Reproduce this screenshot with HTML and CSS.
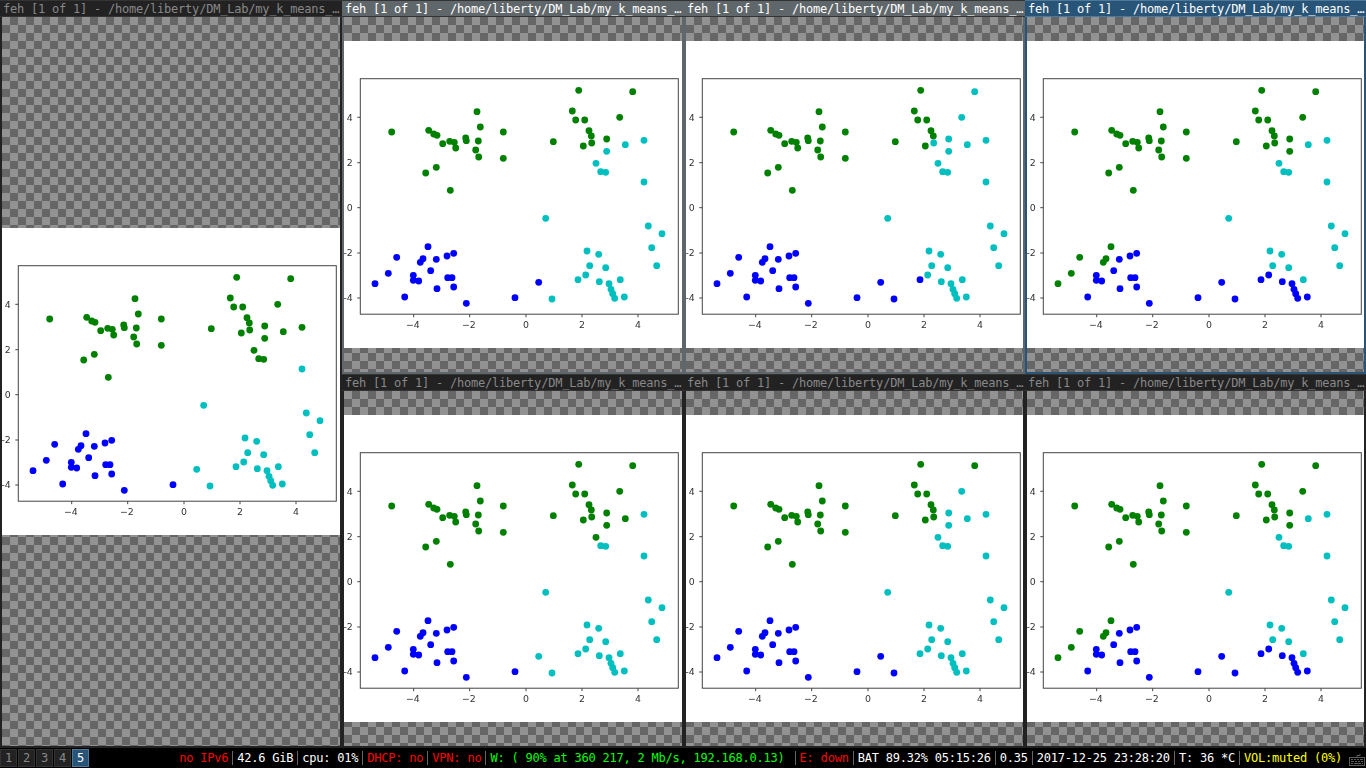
FILE: index.html
```html
<!DOCTYPE html>
<html lang="en">
<head>
    <meta charset="UTF-8">
    <meta name="viewport" content="width=device-width, initial-scale=1.0">
    <title>i3 desktop with feh windows</title>
    <link rel="stylesheet" href="styles.css">
</head>
<body>
    <div class="desktop">
        <div class="workspace">
            <div class="win win-tall">
                <div class="title">feh [1 of 1] - /home/liberty/DM_Lab/my_k_means_…</div>
                <div class="frame"><div class="image"><svg class="plot" data-plot="0"></svg></div></div>
            </div>
            <div class="win win-inactive">
                <div class="title">feh [1 of 1] - /home/liberty/DM_Lab/my_k_means_…</div>
                <div class="frame"><div class="image"><svg class="plot" data-plot="1"></svg></div></div>
            </div>
            <div class="win win-inactive">
                <div class="title">feh [1 of 1] - /home/liberty/DM_Lab/my_k_means_…</div>
                <div class="frame"><div class="image"><svg class="plot" data-plot="2"></svg></div></div>
            </div>
            <div class="win win-focused">
                <div class="title">feh [1 of 1] - /home/liberty/DM_Lab/my_k_means_…</div>
                <div class="frame"><div class="image"><svg class="plot" data-plot="3"></svg></div></div>
            </div>
            <div class="win">
                <div class="title">feh [1 of 1] - /home/liberty/DM_Lab/my_k_means_…</div>
                <div class="frame"><div class="image"><svg class="plot" data-plot="4"></svg></div></div>
            </div>
            <div class="win">
                <div class="title">feh [1 of 1] - /home/liberty/DM_Lab/my_k_means_…</div>
                <div class="frame"><div class="image"><svg class="plot" data-plot="5"></svg></div></div>
            </div>
            <div class="win">
                <div class="title">feh [1 of 1] - /home/liberty/DM_Lab/my_k_means_…</div>
                <div class="frame"><div class="image"><svg class="plot" data-plot="6"></svg></div></div>
            </div>
        </div>

        <div class="bar">
            <div class="tags">
                <span class="tag">1</span>
                <span class="tag">2</span>
                <span class="tag">3</span>
                <span class="tag">4</span>
                <span class="tag tag-active">5</span>
            </div>
            <div class="status">
                <span class="item red">no IPv6</span>
                <span class="item">42.6 GiB</span>
                <span class="item">cpu: 01%</span>
                <span class="item red">DHCP: no</span>
                <span class="item red">VPN: no</span>
                <span class="item green wide">W: ( 90% at 360 217, 2 Mb/s, 192.168.0.13)</span>
                <span class="item red">E: down</span>
                <span class="item">BAT 89.32% 05:15:26</span>
                <span class="item">0.35</span>
                <span class="item">2017-12-25 23:28:20</span>
                <span class="item">T: 36 *C</span>
                <span class="item last yellow">VOL:muted (0%)</span>
                <svg class="kbd" viewBox="0 0 16 12">
                    <path d="M8 3V1.5h3V0" fill="none" stroke="#5c5c5c"/>
                    <rect x="0.5" y="3.5" width="15" height="8" fill="none" stroke="#5c5c5c"/>
                    <path d="M2 5h2v1H2zM5 5h2v1H5zM8 5h2v1H8zM11 5h3v1h-3zM2 7h3v1H2zM6 7h2v1H6zM9 7h2v1H9zM12 7h2v1h-2zM2 9h2v1H2zM5 9h7v1H5zM13 9h1v1h-1z" fill="#5c5c5c"/>
                </svg>
            </div>
        </div>
    </div>

    <script src="script.js"></script>
</body>
</html>
```

FILE: styles.css
```css
* {
    box-sizing: border-box;
}

body {
    margin: 0;
    background-color: #000;
    font-family: "DejaVu Sans Mono", monospace;
    font-size: 12px;
    letter-spacing: -0.22px;
}

.desktop {
    display: flex;
    flex-direction: column;
    width: 1366px;
    height: 768px;
    overflow: hidden;
}

.workspace {
    display: grid;
    grid-template-columns: 342px 342px 341px 341px;
    grid-template-rows: 374px 374px;
}

/* window colours are the i3 defaults */
.win {
    display: flex;
    flex-direction: column;
    min-width: 0;
    --edge: #222;
    --line: #333;
    --head: #222;
    --text: #888;
}

.win-tall {
    grid-row: span 2;
}

.win-inactive {
    --edge: #5f676a;
    --head: #5f676a;
    --text: #fff;
}

.win-focused {
    --edge: #285577;
    --line: #4c7899;
    --head: #285577;
    --text: #fff;
}

.title {
    height: 17px;
    padding: 1px 0 0 3px;
    line-height: 15px;
    white-space: nowrap;
    overflow-x: clip;
    color: var(--text);
    background-color: var(--head);
    border-top: 1px solid var(--line);
    border-bottom: 1px solid var(--line);
}

.frame {
    flex: 1;
    display: flex;
    flex-direction: column;
    justify-content: center;
    min-height: 0;
    border: 2px solid var(--edge);
    border-top: none;
    background: repeating-conic-gradient(#666 0 25%, #929292 0 50%) 0 0 / 16px 16px;
}

.image {
    height: 307px;
    background-color: #fff;
    overflow: hidden;
}

.plot {
    display: block;
    width: 338px;
    height: 307px;
    filter: blur(0.45px);
}

.axes {
    fill: none;
    stroke: #444;
}

.tick {
    stroke: #444;
}

.tick-label {
    font-family: "DejaVu Sans", sans-serif;
    font-size: 9.4px;
    letter-spacing: 0;
    fill: #333;
}

.dot-g {
    fill: #008000;
}

.dot-b {
    fill: #0000ff;
}

.dot-c {
    fill: #00bfbf;
}

.bar {
    flex: 1;
    display: flex;
    justify-content: space-between;
    padding-top: 1px;
    background-color: #000;
}

.tags {
    display: flex;
    gap: 1px;
}

.tag {
    width: 17px;
    height: 18px;
    line-height: 16px;
    text-align: center;
    color: #888;
    background-color: #222;
    border: 1px solid #333;
}

.tag-active {
    color: #fff;
    background-color: #285577;
    border-color: #4c7899;
}

.status {
    display: flex;
    align-items: center;
    height: 18px;
}

.item {
    height: 14px;
    padding: 0 4px;
    line-height: 14px;
    white-space: pre;
    color: #fff;
    border-right: 1px solid #666;
}

.item.last {
    border-right: none;
}

.item.wide {
    padding-right: 10px;
}

.red {
    color: #f00;
}

.green {
    color: #0f0;
}

.yellow {
    color: #ff0;
}

.kbd {
    width: 16px;
    height: 12px;
    margin: 3px 1px 0 3px;
}
```

FILE: script.js
```js
// where the axes box sits inside the picture
const AX_LEFT = 16.3;
const AX_TOP = 37.7;
const AX_W = 318;
const AX_H = 235.5;

const XTICKS = [[53.4, "\u22124"], [109.4, "\u22122"], [165.7, "0"], [221.7, "2"], [277.7, "4"]];
// the picture is cropped tight on the left, so these use a short dash
const YTICKS = [[38.6, "4"], [84, "2"], [129, "0"], [174.3, "-2"], [219.3, "-4"]];

// x, y inside the axes, then the cluster colour in each of the 7 windows
const POINTS = [
    [31.4, 53.3, "ggggggg"], [68.4, 51.6, "ggggggg"], [73.4, 55.3, "ggggggg"], [76.7, 56.6, "ggggggg"],
    [82.4, 65, "ggggggg"], [89.4, 62.6, "ggggggg"], [94, 63.6, "ggggggg"], [95.4, 69.3, "ggggggg"],
    [105.4, 59.3, "ggggggg"], [106, 62, "ggggggg"], [116.7, 33, "ggggggg"], [120, 48.3, "ggggggg"],
    [118, 62.3, "ggggggg"], [115.4, 71.3, "ggggggg"], [118.4, 78.3, "ggggggg"], [143, 53.3, "ggggggg"],
    [143, 79.6, "ggggggg"], [76, 88.6, "ggggggg"], [65.4, 94.3, "ggggggg"], [90, 111.6, "ggggggg"],

    [193, 63, "ggggggg"], [218.4, 11.6, "ggggggg"], [212, 32.3, "ggggggg"], [215.4, 41.3, "ggggggg"],
    [224.4, 41.3, "ggggggg"], [228.7, 52, "ggggggg"], [231, 57.3, "ggggggg"], [223, 67.3, "ggggggg"],
    [272.4, 13, "ggcgggg"], [259.4, 38.6, "ggcggcg"], [231.4, 64.3, "ggcgggg"], [246.4, 60.3, "ggcggcg"],
    [246.4, 72.6, "gccggcg"], [265, 66, "gcccgcc"], [283.7, 61.6, "gcccccc"], [235.7, 84.6, "gcccgcc"],
    [240.4, 93, "gcccccc"], [245.4, 93.6, "gcccccc"], [283.7, 103.3, "ccccccc"],

    [185.4, 139.6, "ccccccc"], [288, 147.3, "ccccccc"], [301.7, 155, "ccccccc"], [291.4, 169, "ccccccc"],
    [296.4, 187, "ccccccc"], [226.7, 172.3, "ccccccc"], [238.4, 175.6, "ccccccc"], [229.4, 187, "ccccccc"],
    [245.4, 189, "ccccccc"], [260, 201, "ccccccc"],
    [217.7, 201, "ccbbccb"], [225.4, 196.3, "cccbccb"], [239, 203, "cccbccb"], [248.7, 205, "cccbccb"],
    [250.7, 210.6, "cccbccb"], [252.4, 215, "cccbccb"], [254.4, 219.6, "cccbccb"], [264, 218.3, "cccbccb"],
    [191.7, 220.3, "ccbbcbb"], [178.4, 203.6, "cbbbcbb"], [154.7, 219, "bbbbbbb"],

    [14.7, 205, "bbbgbbg"], [28, 194.6, "bbbgbbg"], [36.4, 178.6, "bbbgbbg"], [60, 183.6, "bbbgbbg"],
    [62.7, 180, "bbbgbbg"], [67.7, 168, "bbbgbbg"],
    [44.4, 218.3, "bbbbbbb"], [53, 196.6, "bbbbbbb"], [53, 201.6, "bbbbbbb"], [58.4, 202.3, "bbbbbbb"],
    [70.4, 192, "bbbbbbb"], [76, 180.6, "bbbbbbb"], [76.7, 210, "bbbbbbb"], [86.7, 177.3, "bbbbbbb"],
    [87.4, 199, "bbbbbbb"], [91.7, 199, "bbbbbbb"], [93.4, 174.6, "bbbbbbb"], [93.4, 208.3, "bbbbbbb"],
    [106, 224.6, "bbbbbbb"]
];

function drawPlot(svg) {
    const plot = Number(svg.dataset.plot);
    let html = `<g transform="translate(${AX_LEFT} ${AX_TOP})">`;

    XTICKS.forEach(([x, label]) => {
        html += `<line class="tick" x1="${x}" x2="${x}" y1="${AX_H}" y2="${AX_H + 3}"></line>`;
        html += `<text class="tick-label" x="${x - (label.length > 1 ? 0.8 : 0)}" y="${AX_H + 14}" text-anchor="middle">${label}</text>`;
    });
    YTICKS.forEach(([y, label]) => {
        html += `<line class="tick" x1="-3" x2="0" y1="${y}" y2="${y}"></line>`;
        html += `<text class="tick-label" x="-7.5" y="${y + 3.4}" text-anchor="end">${label}</text>`;
    });

    html += `<rect class="axes" x="0" y="0" width="${AX_W}" height="${AX_H}"></rect>`;

    POINTS.forEach(([x, y, colours]) => {
        html += `<circle class="dot-${colours[plot]}" cx="${x}" cy="${y}" r="3.4"></circle>`;
    });

    svg.innerHTML = html + "</g>";
}

document.querySelectorAll(".plot").forEach(drawPlot);
```
